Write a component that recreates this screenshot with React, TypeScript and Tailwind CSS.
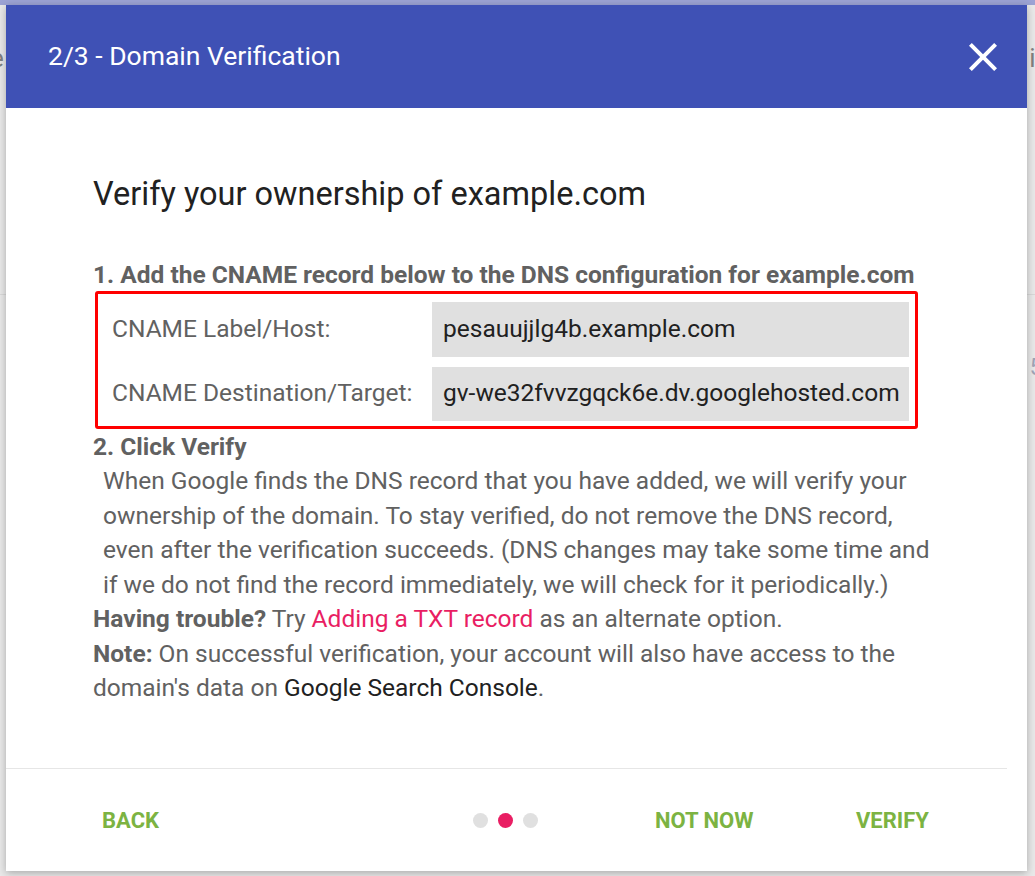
import React from 'react';

const CNAME_ROWS = [
    { label: 'CNAME Label/Host:', value: 'pesauujjlg4b.example.com', h: 'h-[55px]' },
    { label: 'CNAME Destination/Target:', value: 'gv-we32fvvzgqck6e.dv.googlehosted.com', h: 'h-[54px]' },
];

const CloseIcon: React.FC = () => (
    <svg viewBox="0 0 24 24" className="w-12 h-12" fill="#ffffff">
        <path d="M19 6.41L17.59 5 12 10.59 6.41 5 5 6.41 10.59 12 5 17.59 6.41 19 12 13.41 17.59 19 19 17.59 13.41 12z" />
    </svg>
);

const App: React.FC = () => {
    return (
        <div className="relative w-[1035px] h-[876px] overflow-hidden bg-[#e9e9e9] font-['Roboto','Liberation_Sans',sans-serif]">
            {/* page behind the dialog */}
            <div className="h-[5px] bg-[#9ca3d4]" />
            <div className="h-[290px] flex items-start justify-between border-b border-[#d9d9d9]">
                <span className="-ml-[10px] mt-[34px] text-[26px] text-[#808080]">e</span>
                <span className="-mr-[9px] mt-[34px] text-[26px] text-[#808080]">it</span>
            </div>
            <div className="flex justify-end">
                <span className="-mr-[8px] mt-[54px] text-[24px] text-[#a0a4b8]">5</span>
            </div>

            {/* dialog */}
            <div className="absolute left-[6px] top-[5px] w-[1021px] h-[866px] bg-white shadow-[0_2px_8px_rgba(0,0,0,0.28)] flex flex-col">
                <div className="h-[103px] bg-[#3f51b5] flex items-center justify-between pl-[42px] pr-[20px]">
                    <h2 className="text-[26.5px] text-white -mt-[2px]">2/3 - Domain Verification</h2>
                    <CloseIcon />
                </div>

                <div className="pl-[87px] pt-[66px] text-[24.5px] leading-[34.5px] text-[#616161]">
                    <h1 className="text-[32.5px] leading-[40px] text-[#212121]">Verify your ownership of example.com</h1>
                    <p className="mt-[44px] font-bold whitespace-nowrap">1. Add the CNAME record below to the DNS configuration for example.com</p>
                    <div className="ml-[2px] -mt-[2px] w-[823px] border-[3px] border-[#ff0000] rounded-[3px] pt-[8px] pb-[5px] pl-[14px] flex flex-col gap-[10px]">
                        {CNAME_ROWS.map((row) => (
                            <div key={row.label} className="flex items-center">
                                <span className="w-[320px]">{row.label}</span>
                                <span className={`w-[477px] ${row.h} bg-[#e0e0e0] pl-[11px] flex items-center text-[#212121] whitespace-nowrap`}>{row.value}</span>
                            </div>
                        ))}
                    </div>
                    <p className="mt-[1px] font-bold">2. Click Verify</p>
                    <p className="pl-[10px] whitespace-nowrap">
                        When Google finds the DNS record that you have added, we will verify your<br />
                        ownership of the domain. To stay verified, do not remove the DNS record,<br />
                        even after the verification succeeds. (DNS changes may take some time and<br />
                        if we do not find the record immediately, we will check for it periodically.)
                    </p>
                    <p className="whitespace-nowrap">
                        <span className="font-bold">Having trouble?</span> Try <span className="text-[#e91e63]">Adding a TXT record</span> as an alternate option.
                    </p>
                    <p className="whitespace-nowrap">
                        <span className="font-bold">Note:</span> On successful verification, your account will also have access to the<br />
                        domain's data on <span className="text-[#212121]">Google Search Console</span>.
                    </p>
                </div>

                <div className="mt-auto">
                    <div className="h-px mr-[20px] bg-[#e6e6e6]" />
                    <div className="h-[102px] flex items-center pl-[96px] text-[22px] font-bold text-[#7cb342]">
                        <span className="w-[371px]">BACK</span>
                        <div className="w-[182px] flex items-center gap-[10px]">
                            <span className="w-[15px] h-[15px] rounded-full bg-[#e0e0e0]" />
                            <span className="w-[15px] h-[15px] rounded-full bg-[#e91e63]" />
                            <span className="w-[15px] h-[15px] rounded-full bg-[#e0e0e0]" />
                        </div>
                        <span className="w-[201px]">NOT NOW</span>
                        <span>VERIFY</span>
                    </div>
                </div>
            </div>
        </div>
    );
};

export default App;
